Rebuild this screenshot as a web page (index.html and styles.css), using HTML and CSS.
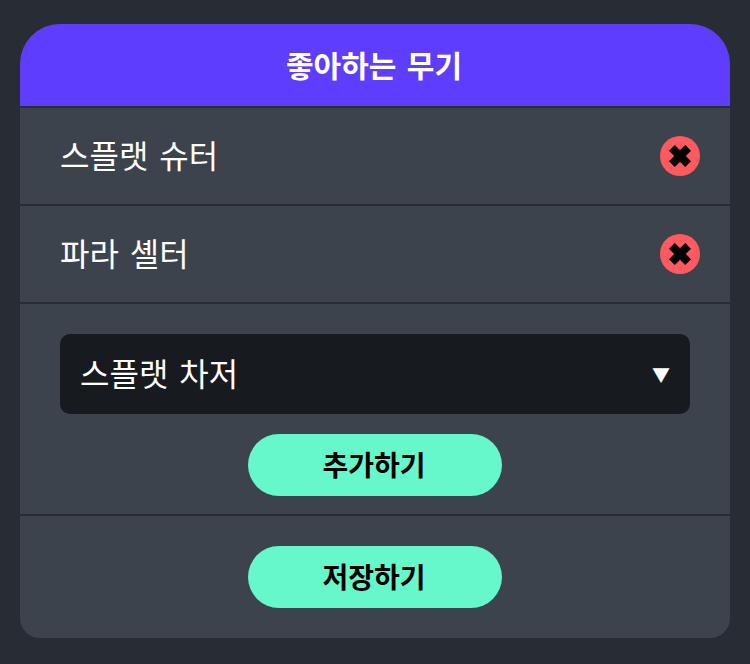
FILE: index.html
```html
<!DOCTYPE html>
<html lang="ko">
<head>
    <meta charset="UTF-8">
    <meta name="viewport" content="width=device-width, initial-scale=1.0">
    <title>좋아하는 무기</title>
    <link rel="stylesheet" href="styles.css">
</head>
<body>
    <div class="card">
        <h1 class="card-title">좋아하는 무기</h1>
        <div class="weapon-row">
            <span class="weapon-name">스플랫 슈터</span>
            <button class="remove-button" aria-label="삭제">
                <svg viewBox="0 0 24 24" width="24" height="24"><path d="M1.5 6.8 6.8 1.5 12 6.7 17.2 1.5 22.5 6.8 17.3 12 22.5 17.2 17.2 22.5 12 17.3 6.8 22.5 1.5 17.2 6.7 12Z" stroke="#000" stroke-width="1" stroke-linejoin="round"/></svg>
            </button>
        </div>
        <div class="weapon-row">
            <span class="weapon-name">파라 셸터</span>
            <button class="remove-button" aria-label="삭제">
                <svg viewBox="0 0 24 24" width="24" height="24"><path d="M1.5 6.8 6.8 1.5 12 6.7 17.2 1.5 22.5 6.8 17.3 12 22.5 17.2 17.2 22.5 12 17.3 6.8 22.5 1.5 17.2 6.7 12Z" stroke="#000" stroke-width="1" stroke-linejoin="round"/></svg>
            </button>
        </div>
        <div class="add-section">
            <div class="select-box">
                <span class="weapon-name">스플랫 차저</span>
                <span class="select-arrow">▼</span>
            </div>
            <button class="button">추가하기</button>
        </div>
        <div class="save-section">
            <button class="button">저장하기</button>
        </div>
    </div>
</body>
</html>
```

FILE: styles.css
```css
* {
    margin: 0;
    padding: 0;
    box-sizing: border-box;
}

body {
    font-family: "Noto Sans CJK KR", "Noto Sans", sans-serif;
    background: #282c34;
    color: #fff;
    padding: 24px 20px 26px;
}

.card {
    background: #3c434d;
    border-radius: 40px 40px 20px 20px;
    overflow: hidden;
}

.card-title {
    height: 84px;
    padding-right: 2px;
    background: #5f3dff;
    border-bottom: 2px solid #282c34;
    font-size: 30px;
    font-weight: 700;
    line-height: 80px;
    word-spacing: 2px;
    text-align: center;
}

.weapon-row {
    height: 98px;
    display: flex;
    justify-content: space-between;
    align-items: center;
    padding: 0 30px 0 40px;
    border-bottom: 2px solid #282c34;
}

.weapon-name {
    font-size: 32px;
    line-height: 44px;
    padding-bottom: 4px;
    word-spacing: 2px;
}

.remove-button {
    width: 40px;
    height: 40px;
    display: flex;
    justify-content: center;
    align-items: center;
    background: #ff5a5f;
    border: none;
    border-radius: 50%;
}

.add-section {
    padding: 30px 40px 18px;
    display: flex;
    flex-direction: column;
    align-items: center;
    gap: 20px;
    border-bottom: 2px solid #282c34;
}

.select-box {
    width: 100%;
    height: 80px;
    display: flex;
    justify-content: space-between;
    align-items: center;
    padding: 0 20px;
    background: #171a1e;
    border-radius: 10px;
}

.select-arrow {
    font-size: 18px;
    line-height: 1;
}

.save-section {
    padding: 30px 0;
    display: flex;
    justify-content: center;
}

.button {
    width: 254px;
    height: 62px;
    padding: 0 2px 2px 0;
    background: #66f7cb;
    color: #000;
    border: none;
    border-radius: 31px;
    font-family: inherit;
    font-size: 28px;
    font-weight: 700;
}
```
